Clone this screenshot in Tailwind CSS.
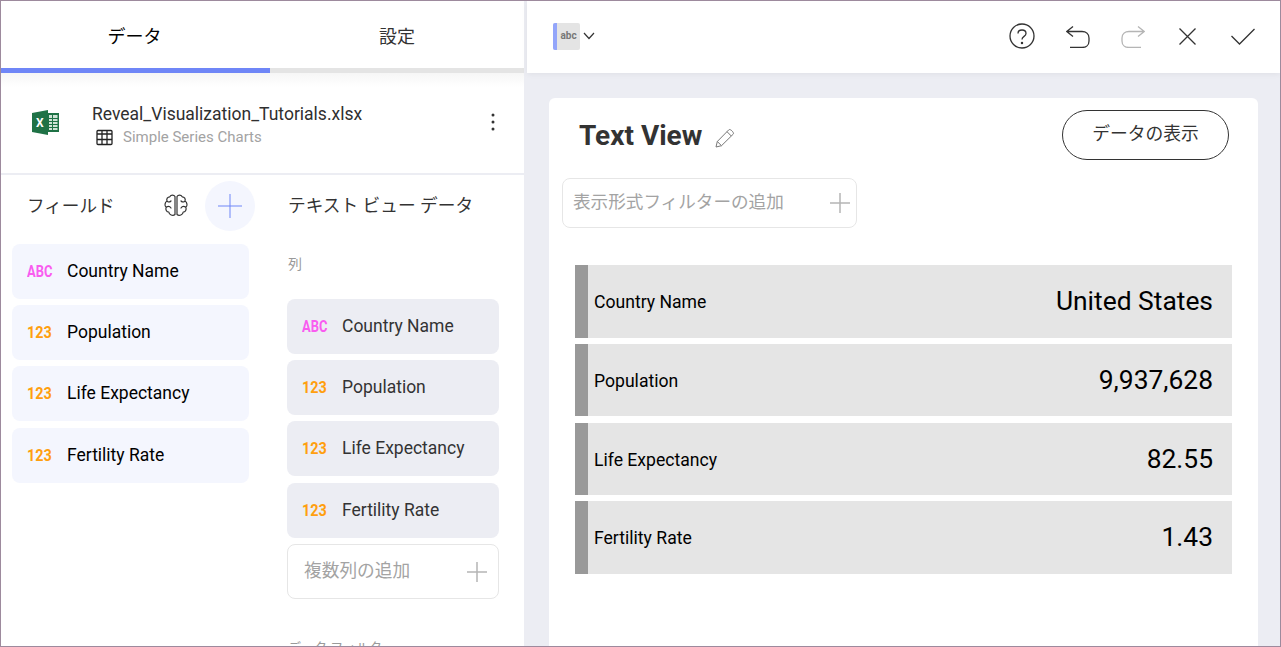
<!DOCTYPE html>
<html lang="ja">
<head>
  <meta charset="UTF-8" />
  <title>Text View</title>
  <script src="https://cdn.jsdelivr.net/npm/@tailwindcss/browser@4"></script>
</head>
<body class="h-[647px] w-[1281px] overflow-hidden bg-white font-['Roboto','Noto_Sans_CJK_JP',sans-serif]">
  <div class="flex h-[647px] w-[1281px] border border-[#9d8a9d] overflow-hidden">

    <!-- left panel -->
    <div class="w-[523px] shrink-0 h-full overflow-hidden">
      <div class="flex h-[72px]">
        <div class="w-[269px] h-[72px] border-b-[5px] border-[#6f86f7] flex items-center justify-center text-[18px] text-black pt-[3px] pr-[2px]">データ</div>
        <div class="w-[254px] h-[72px] border-b-[5px] border-[#e4e4e4] flex items-center justify-center text-[18px] text-[#333] pt-[3px]">設定</div>
      </div>

      <div class="h-[102px] flex items-start border-b-2 border-[#ecedf3] bg-gradient-to-b from-[#f6f6f6] to-white to-[14px] pl-[31px] pr-[28px]">
        <svg class="mt-[37px] w-[27px] h-[25px] shrink-0" viewBox="0 0 27 25">
          <path fill="#1f7246" d="M0 3 L16 0 V25 L0 22 Z"/>
          <rect x="16" y="3" width="11" height="19" fill="#1f7246"/>
          <path fill="#cfe3d6" d="M17 5H25.500V20H17Z"/>
          <path stroke="#1f7246" stroke-width="1" d="M17 8.500H26M17 11.500H26M17 14.500H26M17 17.500H26M20.500 5V20" fill="none"/>
          <text x="4" y="17" font-size="12" font-weight="700" fill="#fff" font-family="Roboto">X</text>
        </svg>
        <div class="ml-[33px] mt-[28px] flex-1">
          <div class="text-[17.500px] leading-[26px] text-[#2f2f2f]">Reveal_Visualization_Tutorials.xlsx</div>
          <div class="flex items-center h-[20px] ml-[4px]">
            <svg class="w-[17px] h-[17px]" viewBox="0 0 17 17" fill="none" stroke="#222" stroke-width="1.300">
              <rect x="1" y="1.500" width="15" height="14" rx="1"/>
              <path d="M1 5H16M1 10.500H16M6 1.500V15.500M11 1.500V15.500"/>
            </svg>
            <span class="ml-[10px] text-[15px] text-[#a3a3a3]">Simple Series Charts</span>
          </div>
        </div>
        <svg class="mt-[39px] w-[6px] h-[20px] shrink-0" viewBox="0 0 6 20" fill="#333">
          <circle cx="3" cy="3" r="1.500"/><circle cx="3" cy="10" r="1.500"/><circle cx="3" cy="17" r="1.500"/>
        </svg>
      </div>

      <div class="flex">
        <!-- fields column -->
        <div class="w-[248px] shrink-0 pl-[11px]">
          <div class="flex items-center h-[50px] mt-[6px] mb-[13px] w-[244px]">
            <span class="ml-[15px] w-[88px] shrink-0 whitespace-nowrap text-[17.600px] text-[#333]">フィールド</span>
            <svg class="ml-[48px] w-[26px] h-[26px] shrink-0" viewBox="0 0 26 26" fill="none" stroke="#333" stroke-width="1.200" stroke-linecap="round" stroke-linejoin="round">
              <path d="M12 3.500C11 1.800 8 1.500 6.800 3.800C4.500 3.800 3.200 6 4 8C1.800 9.300 1.200 12.800 3.200 14.300C2.200 16.500 3.500 19 5.800 19C6 21.800 9.800 23.500 12 21.500Z"/>
              <path d="M14 3.500C15 1.800 18 1.500 19.200 3.800C21.500 3.800 22.800 6 22 8C24.200 9.300 24.800 12.800 22.800 14.300C23.800 16.500 22.500 19 20.200 19C20 21.800 16.200 23.500 14 21.500Z"/>
              <path d="M4.500 8.500C6 9.500 7 9 8 8M3.500 14C5.500 13 7 13.500 8 15M21.500 8.500C20 9.500 19 9 18 8M22.500 14C20.500 13 19 13.500 18 15"/>
            </svg>
            <div class="ml-[16px] w-[50px] h-[50px] shrink-0 rounded-full bg-[#f4f6fe] flex items-center justify-center">
              <svg class="w-[24px] h-[24px]" viewBox="0 0 24 24" stroke="#6f86f7" stroke-width="1"><path d="M0 12H24M12 0V24"/></svg>
            </div>
          </div>
          <div class="w-[237px] flex flex-col gap-[6px]">
            <div class="h-[55px] rounded-[8px] bg-[#f4f6fe] flex items-center pl-[15px] text-[17.500px] text-black"><span class="w-[40px] text-[17px] font-bold text-[#f95cf0] origin-left scale-x-[0.76]">ABC</span>Country Name</div>
            <div class="h-[55px] rounded-[8px] bg-[#f4f6fe] flex items-center pl-[15px] text-[17.500px] text-black"><span class="w-[40px] text-[17px] font-bold text-[#ff9f0f] origin-left scale-x-[0.85]">123</span>Population</div>
            <div class="h-[55px] rounded-[8px] bg-[#f4f6fe] flex items-center pl-[15px] text-[17.500px] text-black"><span class="w-[40px] text-[17px] font-bold text-[#ff9f0f] origin-left scale-x-[0.85]">123</span>Life Expectancy</div>
            <div class="h-[55px] mt-[1px] rounded-[8px] bg-[#f4f6fe] flex items-center pl-[15px] text-[17.500px] text-black"><span class="w-[40px] text-[17px] font-bold text-[#ff9f0f] origin-left scale-x-[0.85]">123</span>Fertility Rate</div>
          </div>
        </div>

        <!-- text view data column -->
        <div class="pl-[38px] w-[250px] shrink-0">
          <div class="h-[50px] mt-[6px] flex items-center pl-[1px] text-[17.700px] text-[#333]">テキスト ビュー データ</div>
          <div class="mt-[24px] h-[18px] pl-[1px] text-[14px] text-[#9a9a9a] leading-[18px]">列</div>
          <div class="mt-[26px] w-[212px] flex flex-col gap-[6px]">
            <div class="h-[55px] rounded-[8px] bg-[#ecedf3] flex items-center pl-[15px] text-[17.500px] text-[#333]"><span class="w-[40px] text-[17px] font-bold text-[#f95cf0] origin-left scale-x-[0.76]">ABC</span>Country Name</div>
            <div class="h-[55px] rounded-[8px] bg-[#ecedf3] flex items-center pl-[15px] text-[17.500px] text-[#333]"><span class="w-[40px] text-[17px] font-bold text-[#ff9f0f] origin-left scale-x-[0.85]">123</span>Population</div>
            <div class="h-[55px] rounded-[8px] bg-[#ecedf3] flex items-center pl-[15px] text-[17.500px] text-[#333]"><span class="w-[40px] text-[17px] font-bold text-[#ff9f0f] origin-left scale-x-[0.85]">123</span>Life Expectancy</div>
            <div class="h-[55px] mt-[1px] rounded-[8px] bg-[#ecedf3] flex items-center pl-[15px] text-[17.500px] text-[#333]"><span class="w-[40px] text-[17px] font-bold text-[#ff9f0f] origin-left scale-x-[0.85]">123</span>Fertility Rate</div>
            <div class="h-[55px] rounded-[8px] border border-[#e6e6e6] flex items-center justify-between pl-[16px] pr-[11px] text-[17.700px] text-[#a3a3a3]">複数列の追加
              <svg class="w-[20px] h-[20px]" viewBox="0 0 20 20" stroke="#b5b5b5" stroke-width="1.500"><path d="M0 10H20M10 0V20"/></svg>
            </div>
          </div>
          <div class="mt-[39px] pl-[1px] text-[13px] leading-[20px] text-[#9a9a9a]">データ フィルター</div>
        </div>
      </div>
    </div>

    <div class="w-[3px] shrink-0 h-[73px] bg-[#e4e4e4]"></div>

    <!-- right side -->
    <div class="flex-1 h-full flex flex-col bg-[#ecedf3] -ml-[3px] min-w-0">
      <div class="ml-[3px] h-[72px] shrink-0 bg-white shadow-[0_1px_6px_rgba(0,0,0,0.06)] flex items-center pl-[26px] pr-[25px] pb-[2px]">
        <div class="relative w-[27px] h-[27px] rounded-[2px] bg-[#e4e4e4] overflow-hidden flex items-center justify-center pl-[4px] text-[10px] font-bold text-[#777] leading-none">abc
          <div class="absolute left-0 top-0 bottom-0 w-[4px] bg-[#93a5fa]"></div>
        </div>
        <svg class="ml-[3px] w-[12px] h-[8px]" viewBox="0 0 12 8" fill="none" stroke="#333" stroke-width="1.200"><path d="M1 1L6 6.500L11 1"/></svg>
        <div class="ml-auto flex items-center">
          <svg class="w-[26px] h-[26px]" viewBox="0 0 26 26" fill="none" stroke="#333" stroke-width="1.300">
            <circle cx="13" cy="13" r="12"/>
            <path d="M9 10.500C9 5.800 17 5.800 17 10.500C17 13.500 13 13.300 13 16.500"/>
            <circle cx="13" cy="20" r="0.600" fill="#333"/>
          </svg>
          <svg class="ml-[31px] w-[24px] h-[22px] mt-[1px]" viewBox="0 0 24 22" fill="none" stroke="#333" stroke-width="1.300">
            <path d="M7 .5L.8 5.500L7 10.500M.8 5.500H16C20 5.500 23 8 23 12V15C23 19 20 21.500 16 21.500H4"/>
          </svg>
          <svg class="ml-[31px] w-[24px] h-[22px] mt-[1px]" viewBox="0 0 24 22" fill="none" stroke="#b5b5b5" stroke-width="1.300">
            <path d="M17 .5L23.200 5.500L17 10.500M23.200 5.500H8C4 5.500 1 8 1 12V15C1 19 4 21.500 8 21.500H20"/>
          </svg>
          <svg class="ml-[34px] w-[17px] h-[17px]" viewBox="0 0 17 17" fill="none" stroke="#333" stroke-width="1.300"><path d="M0.500 0.500L16.500 16.500M16.500 0.500L0.500 16.500"/></svg>
          <svg class="ml-[35px] w-[24px] h-[17px]" viewBox="0 0 24 17" fill="none" stroke="#333" stroke-width="1.300"><path d="M0.500 8L8.500 16L23.500 1"/></svg>
        </div>
      </div>

      <div class="ml-[25px] mt-[25px] w-[709px] flex-1 bg-white rounded-t-[6px] overflow-hidden">
        <div class="flex items-center h-[80px] pl-[30px] pr-[29px]">
          <span class="text-[28px] font-bold text-[#333] mt-[-4px]">Text View</span>
          <svg class="ml-[13px] w-[20px] h-[20px] shrink-0" viewBox="0 0 20 20" fill="none" stroke="#777" stroke-width="1" stroke-linejoin="round">
            <path d="M1 19L2.300 13.500L13.800 1.800C15.200 .4 19.600 4.800 18.200 6.200L6.500 17.700Z"/>
            <path d="M12 3.700L16.300 8M2.300 13.500L6.500 17.700"/>
          </svg>
          <div class="ml-auto w-[167px] h-[50px] rounded-full border border-[#333] flex items-center justify-center text-[17.800px] text-[#333] mb-[7px]">データの表示</div>
        </div>
        <div class="ml-[13px] w-[295px] h-[50px] rounded-[8px] border border-[#e6e6e6] flex items-center justify-between pl-[10px] pr-[6px] text-[17.600px] text-[#a3a3a3]"><span class="mb-[2px]">表示形式フィルターの追加</span>
          <svg class="w-[20px] h-[20px]" viewBox="0 0 20 20" stroke="#b5b5b5" stroke-width="1.500"><path d="M0 10H20M10 0V20"/></svg>
        </div>
        <div class="ml-[26px] mt-[37px] w-[657px] flex flex-col gap-[6px]">
          <div class="h-[73px] flex items-center bg-[#e5e5e5] border-l-[13px] border-[#999] pl-[6px] pr-[19px] text-[17.600px] text-black"><span class="mt-[1px]">Country Name</span><span class="ml-auto text-[26.400px]">United States</span></div>
          <div class="h-[72px] flex items-center bg-[#e5e5e5] border-l-[13px] border-[#999] pl-[6px] pr-[19px] pt-[2px] text-[17.600px] text-black"><span>Population</span><span class="ml-auto text-[26.400px]">9,937,628</span></div>
          <div class="h-[72px] mt-[1px] flex items-center bg-[#e5e5e5] border-l-[13px] border-[#999] pl-[6px] pr-[19px] pt-[2px] text-[17.600px] text-black"><span>Life Expectancy</span><span class="ml-auto text-[26.400px]">82.55</span></div>
          <div class="h-[73px] flex items-center bg-[#e5e5e5] border-l-[13px] border-[#999] pl-[6px] pr-[19px] text-[17.600px] text-black"><span class="mt-[2px]">Fertility Rate</span><span class="ml-auto text-[26.400px]">1.43</span></div>
        </div>
      </div>
    </div>
  </div>
</body>
</html>
